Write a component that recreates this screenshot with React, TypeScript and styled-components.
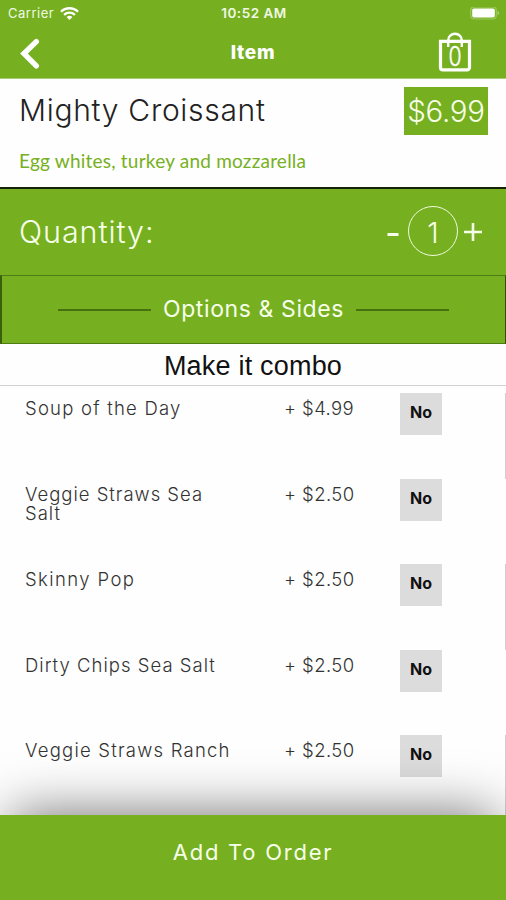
import React from "react";
import styled, { createGlobalStyle } from "styled-components";

const green = "#76b021";

const GlobalStyle = createGlobalStyle`
  * { box-sizing: border-box; }
  body { margin: 0; background: #fff; }
  button { border: 0; padding: 0; background: none; color: inherit; font: inherit; }
`;

const Screen = styled.div`
  display: flex;
  flex-direction: column;
  width: 506px;
  height: 900px;
  overflow: hidden;
  background: #fefefe;
  font-family: Inter, sans-serif;
  white-space: nowrap;
`;

const Header = styled.header`
  height: 79px;
  flex: none;
  background: ${green};
  color: #fff;
  border-bottom: 1px solid #a9cd78;
`;

const StatusBar = styled.div`
  display: grid;
  grid-template-columns: 1fr auto 1fr;
  align-items: center;
  height: 27px;
  padding: 0 6px 0 8px;
  font: 500 12.5px/27px Inter, sans-serif;
  color: #f0f8e4;
`;

const Carrier = styled.div`
  display: flex;
  align-items: center;
  gap: 6px;
  font-size: 13px;
  font-weight: 400;
  letter-spacing: 0.5px;
`;

const Clock = styled.div`
  font-size: 13.5px;
  font-weight: 600;
  letter-spacing: 0.5px;
`;

const BatteryIcon = styled.svg`
  justify-self: end;
`;

const NavBar = styled.nav`
  display: grid;
  grid-template-columns: 60px 1fr 60px;
  align-items: center;
  height: 51px;
  padding: 0 19px;
`;

const NavTitle = styled.h1`
  margin: 0;
  text-align: center;
  font: 800 19px/51px Inter, sans-serif;
  letter-spacing: 0.7px;
`;

const IconButton = styled.button<{ $end?: boolean }>`
  display: flex;
  justify-content: ${(p) => (p.$end ? "flex-end" : "flex-start")};
  padding: ${(p) => (p.$end ? "0 15.5px 2px 0" : "0")};
`;

const Summary = styled.section`
  height: 108px;
  flex: none;
  padding: 8px 18px 0 19px;
`;

const SummaryTop = styled.div`
  display: flex;
  justify-content: space-between;
`;

const ItemName = styled.h2`
  margin: 0;
  font: 300 30px/46px Inter, sans-serif;
  letter-spacing: 0.7px;
  color: #222;
`;

const Price = styled.div`
  width: 84px;
  height: 48px;
  background: ${green};
  color: #f6ffe9;
  text-align: center;
  font: 300 29.5px/48px Inter, sans-serif;
  letter-spacing: -0.3px;
`;

const Description = styled.p`
  margin: 14px 0 0;
  font: 400 19px/24px Lato, sans-serif;
  letter-spacing: 0.22px;
  color: ${green};
`;

const QuantityBar = styled.section`
  display: flex;
  align-items: center;
  justify-content: space-between;
  height: 88px;
  flex: none;
  padding: 0 24px 2px 19px;
  border-top: 2px solid #16210a;
  background: ${green};
  color: #f6ffe9;
`;

const QuantityLabel = styled.div`
  padding-top: 2px;
  font: 300 30.5px/40px Inter, sans-serif;
  letter-spacing: 0.9px;
`;

const Stepper = styled.div`
  display: flex;
  align-items: center;
`;

const StepIcon = styled.svg`
  display: block;
`;

const Count = styled.div`
  width: 50px;
  height: 50px;
  margin: 0 6px 0 9px;
  border: 1.5px solid #f0fbdc;
  border-radius: 50%;
  text-align: center;
  font: 300 29px/51px Inter, sans-serif;
`;

const SectionHeading = styled.section`
  display: flex;
  align-items: center;
  justify-content: center;
  gap: 12px;
  height: 69px;
  flex: none;
  border: 1px solid #4e7b12;
  border-left: 2px solid #3a600c;
  border-right-color: #2f500a;
  background: ${green};
  color: #f6ffe9;
  font: 400 23px/64px Inter, sans-serif;
  letter-spacing: 0.6px;
`;

const HeadingText = styled.span`
  padding-bottom: 2px;
`;

const Rule = styled.span`
  width: 93px;
  height: 2px;
  background: #47700f;
`;

const GroupTitle = styled.h3`
  height: 42px;
  flex: none;
  margin: 0;
  border-bottom: 1px solid #d2d2d2;
  text-align: center;
  font: 400 27px/44px "Liberation Sans", sans-serif;
  letter-spacing: 0.2px;
  color: #111;
`;

const OptionList = styled.div`
  flex: 1;
  min-height: 0;
  overflow: hidden;
  padding-top: 7px;
`;

const OptionRow = styled.div<{ $marked: boolean }>`
  display: grid;
  grid-template-columns: 259px 116px 42px;
  height: 85.6px;
  padding-left: 25px;
  border-right: 1px solid ${(p) => (p.$marked ? "#cfcfcf" : "transparent")};
  font: 300 18.5px/19.5px Inter, sans-serif;
  color: #333;
`;

const OptionName = styled.div<{ $spacing: number }>`
  width: 215px;
  padding-top: 6px;
  white-space: pre-line;
  letter-spacing: ${(p) => p.$spacing}px;
`;

const OptionPrice = styled.div`
  padding-top: 6px;
  letter-spacing: 0.4px;
`;

const Toggle = styled.button`
  width: 42px;
  height: 42px;
  background: #dcdcdc;
  color: #111;
  text-align: center;
  font: 700 16px/38px Inter, sans-serif;
  padding-bottom: 4px;
`;

const Footer = styled.button`
  position: relative;
  height: 85px;
  flex: none;
  background: ${green};
  color: #f6ffe9;
  text-align: center;
  font: 400 22px/75px Inter, sans-serif;
  letter-spacing: 1.75px;
  padding-bottom: 10px;
  box-shadow: 0 -12px 54px -11px rgba(0, 0, 0, 0.56);
`;

const options = [
  { name: "Soup of the Day", price: "+ $4.99", spacing: 1.22 },
  { name: "Veggie Straws Sea\nSalt", price: "+ $2.50", spacing: 0.98 },
  { name: "Skinny Pop", price: "+ $2.50", spacing: 1.4 },
  { name: "Dirty Chips Sea Salt", price: "+ $2.50", spacing: 1.02 },
  { name: "Veggie Straws Ranch", price: "+ $2.50", spacing: 1.22 },
];

export default function App() {
  return (
    <Screen>
      <GlobalStyle />
      <Header>
        <StatusBar>
          <Carrier>
            Carrier
            <svg width="19" height="14" viewBox="0 0 19 14" fill="none" stroke="#fff" strokeWidth="2.3">
              <path d="M1 4.7a12.2 12.2 0 0 1 17 0M4.1 7.8a7.8 7.8 0 0 1 10.8 0" />
              <path d="M9.5 13 6.6 10.1a4.2 4.2 0 0 1 5.8 0z" fill="#fff" stroke="none" />
            </svg>
          </Carrier>
          <Clock>10:52 AM</Clock>
          <BatteryIcon width="30" height="14" viewBox="0 0 30 14">
            <rect x="0.7" y="0" width="25.6" height="12" rx="3.4" fill="none" stroke="#9dc85f" strokeWidth="1.2" />
            <rect x="2.2" y="1.5" width="22.6" height="9" rx="1.8" fill="#fff" />
            <path d="M27.6 4v4c1.9-.7 1.9-3.3 0-4z" fill="#b5d588" />
          </BatteryIcon>
        </StatusBar>
        <NavBar>
          <IconButton aria-label="Back">
            <svg width="22" height="32" viewBox="0 0 22 32" fill="none" stroke="#fff" strokeWidth="5.4" strokeLinecap="round">
              <path d="M17.3 4.6 5 16.6 17.3 28.8" strokeLinejoin="miter" />
            </svg>
          </IconButton>
          <NavTitle>Item</NavTitle>
          <IconButton $end aria-label="Bag">
            <svg width="34" height="40" viewBox="0 0 34 40" fill="none" stroke="#fff">
              <path d="M2.5 9.4h29v26.1a2.4 2.4 0 0 1-2.4 2.4H4.9a2.4 2.4 0 0 1-2.4-2.4z" strokeWidth="3.2" />
              <path d="M10.2 15V8.5a6.8 6.8 0 0 1 13.6 0V15" strokeWidth="2.4" />
              <text x="21.3" y="34" textAnchor="middle" transform="scale(.8 1)" fill="#fff" stroke="#fff" strokeWidth="0.4" fontFamily="Inter, sans-serif" fontSize="26.5" fontWeight="300">0</text>
            </svg>
          </IconButton>
        </NavBar>
      </Header>
      <Summary>
        <SummaryTop>
          <ItemName>Mighty Croissant</ItemName>
          <Price>$6.99</Price>
        </SummaryTop>
        <Description>Egg whites, turkey and mozzarella</Description>
      </Summary>
      <QuantityBar>
        <QuantityLabel>Quantity:</QuantityLabel>
        <Stepper>
          <StepIcon width="12" height="20" viewBox="0 0 12 20" stroke="#f6ffe9" strokeWidth="3">
            <path d="M.5 13.5h11" />
          </StepIcon>
          <Count>1</Count>
          <StepIcon width="18" height="20" viewBox="0 0 18 20" stroke="#f6ffe9" strokeWidth="2.6">
            <path d="M0 11h18M9 2v18" />
          </StepIcon>
        </Stepper>
      </QuantityBar>
      <SectionHeading>
        <Rule />
        <HeadingText>Options &amp; Sides</HeadingText>
        <Rule />
      </SectionHeading>
      <GroupTitle>Make it combo</GroupTitle>
      <OptionList>
        {options.map((o, i) => (
          <OptionRow key={o.name} $marked={i % 2 === 0}>
            <OptionName $spacing={o.spacing}>{o.name}</OptionName>
            <OptionPrice>{o.price}</OptionPrice>
            <Toggle>No</Toggle>
          </OptionRow>
        ))}
      </OptionList>
      <Footer>Add To Order</Footer>
    </Screen>
  );
}
